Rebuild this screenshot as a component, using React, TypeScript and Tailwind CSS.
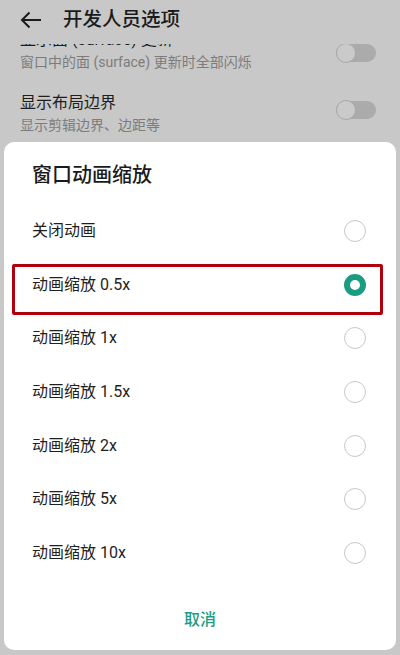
import React from 'react'

const OPTIONS = [
    { label: '关闭动画', selected: false },
    { label: '动画缩放 0.5x', selected: true },
    { label: '动画缩放 1x', selected: false },
    { label: '动画缩放 1.5x', selected: false },
    { label: '动画缩放 2x', selected: false },
    { label: '动画缩放 5x', selected: false },
    { label: '动画缩放 10x', selected: false },
]

const Toggle = () => (
    <div className="relative h-[18px] w-[40px] rounded-full bg-[#ababab]">
        <div className="absolute left-0 top-[-1px] h-[20px] w-[20px] rounded-full border-[1.5px] border-[#a9a9a9] bg-[#cacaca]" />
    </div>
)

const Radio = ({ selected }: { selected: boolean }) =>
    selected ? (
        <div className="h-[22px] w-[22px] rounded-full border-[6px] border-[#1a9c82] bg-white" />
    ) : (
        <div className="h-[22px] w-[22px] rounded-full border-[1.5px] border-[#c8c8c8] bg-white" />
    )

const App = () => {
    return (
        <div
            className="relative h-[655px] w-[400px] overflow-hidden bg-[#c8c8c8]"
            style={{ fontFamily: "Roboto, 'Noto Sans CJK SC', sans-serif" }}
        >
            {/* app bar */}
            <div className="flex h-[40px] items-center">
                <svg
                    width="22"
                    height="18"
                    viewBox="0 0 22 18"
                    className="ml-[20px]"
                    fill="none"
                    stroke="#1b1b1b"
                    strokeWidth="2"
                >
                    <path d="M21 9H2M9.5 1.5L2 9l7.5 7.5" />
                </svg>
                <span className="ml-[21px] text-[19.5px] font-medium text-[#1b1b1b]">开发人员选项</span>
            </div>

            {/* list behind the dialog, scrolled under the app bar */}
            <div className="mt-[4px] h-[98px] overflow-hidden">
                <div className="-mt-[16px] flex items-center justify-between pl-[20px] pr-[24px]">
                    <div className="flex flex-col">
                        <span className="text-[16px] leading-[24px] text-[#1e1e1e]">显示面 (surface) 更新</span>
                        <span className="text-[14px] leading-[20px] text-[#7c7c7c]">窗口中的面 (surface) 更新时全部闪烁</span>
                    </div>
                    <div className="mt-[6px]">
                        <Toggle />
                    </div>
                </div>
                <div className="mt-[19px] flex items-center justify-between pl-[20px] pr-[24px]">
                    <div className="flex flex-col">
                        <span className="text-[16px] leading-[24px] text-[#1e1e1e]">显示布局边界</span>
                        <span className="text-[14px] leading-[20px] text-[#7c7c7c]">显示剪辑边界、边距等</span>
                    </div>
                    <div className="-mt-[6px]">
                        <Toggle />
                    </div>
                </div>
            </div>

            {/* dialog */}
            <div className="mx-[4px] rounded-[10px] bg-white">
                <div className="pb-[15px] pl-[28px] pt-[19px] text-[20px] font-medium leading-[28px] text-[#1a1a1a]">
                    窗口动画缩放
                </div>
                {OPTIONS.map((o) => (
                    <div
                        key={o.label}
                        className="relative flex h-[53.7px] items-center justify-between pl-[28px] pr-[30px]"
                    >
                        <span className="text-[16px] text-[#1f1f1f]">{o.label}</span>
                        <Radio selected={o.selected} />
                        {o.selected && (
                            <div className="absolute bottom-[-4px] left-[8px] right-[13px] top-[6px] rounded-[2px] border-[3px] border-[#b0000e]" />
                        )}
                    </div>
                ))}
                <div className="flex justify-center pb-[18px] pt-[28px]">
                    <span className="text-[16px] font-medium leading-[24px] text-[#1f9c84]">取消</span>
                </div>
            </div>
        </div>
    )
}

export default App
